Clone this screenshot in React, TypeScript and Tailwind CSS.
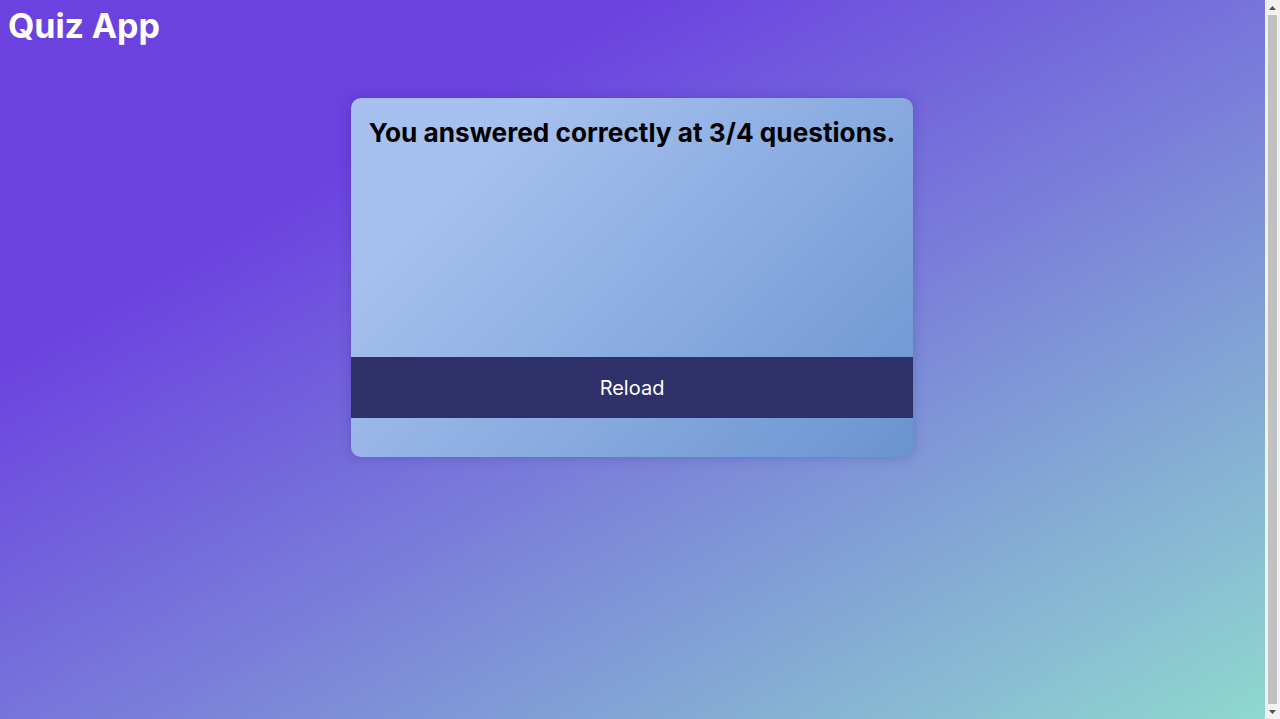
import React from "react";

export default function App() {
  return (
    <div className="flex h-screen w-full overflow-hidden" style={{ fontFamily: "Inter, 'Noto Sans', sans-serif" }}>
      <div className="h-full flex-1 bg-[linear-gradient(to_bottom_right,#6b42e0_25%,#8fd8cf)] text-white">
        <h1 className="px-2 pt-[2px] text-[34px] font-bold leading-[48px] tracking-[-0.1px]">Quiz App</h1>
        <div className="flex justify-center pt-[48px]">
          <div className="ml-[-1px] w-[562px] overflow-hidden rounded-[10px] bg-[linear-gradient(135deg,#a6c0ef_20%,#6a94cf)] shadow-[0_0_12px_rgba(40,30,120,0.25)]">
            <div className="h-[259px] pt-[16px] text-center">
              <h2 className="text-[26.2px] font-bold leading-[38px] text-black">
                You answered correctly at 3/4 questions.
              </h2>
            </div>
            <button className="flex h-[61px] w-full items-center justify-center bg-[#2f3069] text-[20px] text-white">
              Reload
            </button>
            <div className="h-[39px]" />
          </div>
        </div>
      </div>
      <div className="flex h-full w-[15px] flex-col items-center bg-[#f1f1f1]">
        <div className="flex h-[15px] w-full items-center justify-center">
          <svg width="7" height="4" viewBox="0 0 7 4"><path d="M3.5 0L7 4H0z" fill="#505050" /></svg>
        </div>
        <div className="w-[9px] flex-1 bg-[#c1c1c1]" />
        <div className="flex h-[15px] w-full items-center justify-center">
          <svg width="7" height="4" viewBox="0 0 7 4"><path d="M0 0H7L3.5 4z" fill="#505050" /></svg>
        </div>
      </div>
    </div>
  );
}
